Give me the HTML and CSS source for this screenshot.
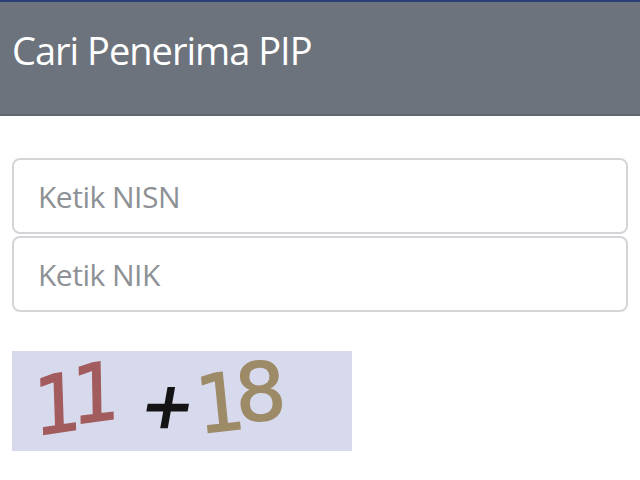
FILE: index.html
```html
<!DOCTYPE html>
<html lang="id">
<head>
<meta charset="utf-8">
<title>Cari Penerima PIP</title>
<link rel="stylesheet" href="styles.css">
</head>
<body>
<header class="topbar">
  <h1 class="title">Cari Penerima PIP</h1>
</header>
<main class="content">
  <form class="search-form">
    <input class="field" type="text" placeholder="Ketik NISN">
    <input class="field" type="text" placeholder="Ketik NIK">
  </form>
  <div class="captcha">
    <span class="digit d1">1</span>
    <span class="digit d2">1</span>
    <span class="op">+</span>
    <span class="digit d3">1</span>
    <span class="digit d4">8</span>
  </div>
</main>
</body>
</html>
```
FILE: styles.css
```css
html, body {
  margin: 0;
  padding: 0;
  background: #ffffff;
}
body {
  font-family: "Open Sans", "Noto Sans", sans-serif;
  width: 640px;
  height: 480px;
  overflow: hidden;
}
.topbar {
  height: 112px;
  background: #6c737c;
  border-top: 2px solid #2a3f73;
  border-bottom: 2px solid #5f666e;
  display: flex;
  align-items: flex-start;
  padding: 0 12px;
}
.title {
  margin: 26px 0 0 0;
  font-weight: 400;
  font-size: 38px;
  letter-spacing: -1px;
  color: #ffffff;
  line-height: 44px;
}
.content {
  padding: 42px 12px 0 12px;
}
.search-form {
  display: flex;
  flex-direction: column;
  gap: 2px;
}
.field {
  box-sizing: border-box;
  width: 616px;
  height: 76px;
  border: 2px solid #d3d5d8;
  border-radius: 8px;
  padding: 0 24px;
  font-family: "Open Sans", sans-serif;
  font-size: 30px;
  letter-spacing: -0.5px;
  color: #333;
  background: #fff;
  outline: none;
}
.field::placeholder {
  color: #8d9094;
}
.captcha {
  margin-top: 39px;
  width: 340px;
  height: 100px;
  background: #d7daed;
  display: flex;
  align-items: flex-start;
  padding-left: 20px;
  box-sizing: border-box;
  font-family: "DejaVu Sans", sans-serif;
}
.digit, .op {
  display: inline-block;
  font-size: 80px;
  line-height: 80px;
  height: 80px;
  -webkit-text-stroke: 1.5px currentColor;
}
.d1 {
  color: #a35c5e;
  transform: scaleX(0.95) rotate(-8deg) skewX(-6deg);
  margin: 14px -13px 0 0;
}
.d2 {
  color: #a35c5e;
  transform: scaleX(0.95) rotate(-7deg) skewX(-6deg);
  margin: 3px 0 0 0;
}
.op {
  color: #141414;
  font-size: 62px;
  line-height: 62px;
  height: 62px;
  transform: skewX(-10deg);
  margin: 24px 0 0 21px;
  -webkit-text-stroke: 2.5px currentColor;
}
.d3 {
  color: #9d8b68;
  transform: scaleX(0.95) rotate(-6deg);
  margin: 13px -11px 0 1px;
}
.d4 {
  color: #9d8b68;
  transform: rotate(-4deg);
  margin: 2px 0 0 0;
}
```
